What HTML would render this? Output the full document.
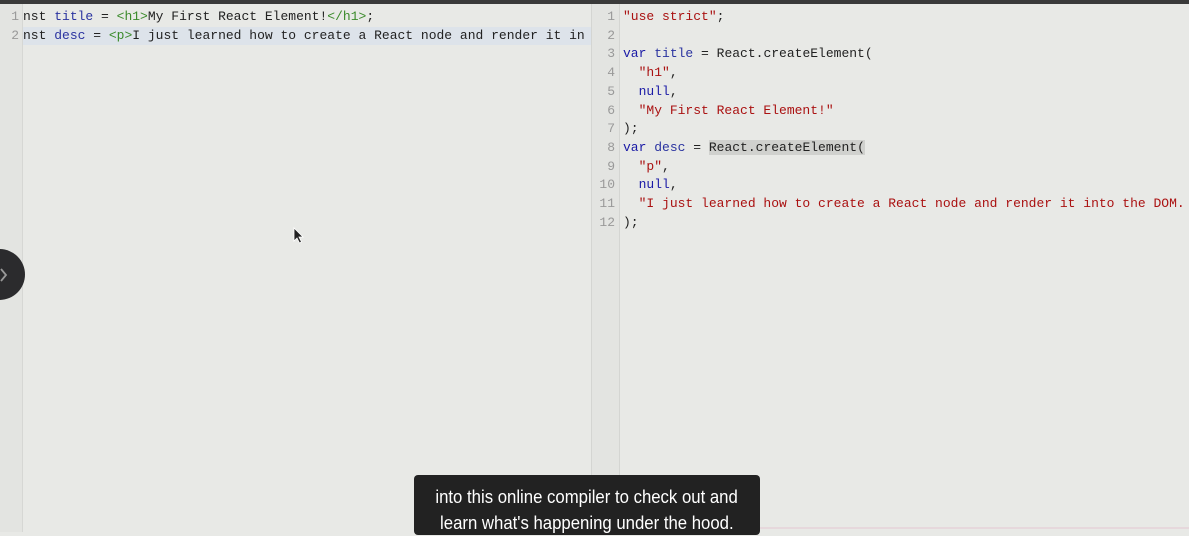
<!DOCTYPE html>
<html><head><style>
body{margin:0;width:1189px;height:532px;overflow:hidden;background:#e8e9e6;position:relative;font-family:"Liberation Mono",monospace;font-size:13px}
.top{position:absolute;left:0;top:0;width:1189px;height:4px;background:#3a3a3a}
.lg{position:absolute;left:0;top:4px;width:22px;height:528px;background:#e3e4e1;border-right:1px solid #d6d7d4}
.mid{position:absolute;left:591px;top:4px;width:27px;height:528px;background:#e3e4e1;border-left:1px solid #d4d5d2;border-right:1px solid #d4d5d2}
.ln{position:absolute;white-space:pre;line-height:18.7px;height:18.7px}
.num{color:#999;text-align:right}
.k{color:#1a1aa6}.v{color:#2a33a0}.s{color:#a11}.t{color:#3a8a2a}.d{color:#222}
.hl{position:absolute;left:23px;top:27px;width:568px;height:18px;background:#dde3ea}
.sel{background:#d0d1ce}
.sub{position:absolute;left:414px;top:475px;width:346px;height:60px;background:#222;border-radius:4px;color:#fff;font-family:"Liberation Sans",sans-serif;font-size:18px;text-align:center;line-height:26px;padding-top:9px;box-sizing:border-box;white-space:nowrap}
.sub span{display:inline-block;transform:scaleX(0.93)}
.circ{position:absolute;left:-26px;top:249px;width:51px;height:51px;border-radius:50%;background:#2b2b2d}
.pink{position:absolute;left:760px;top:527px;width:429px;height:2px;background:#e6d8dc}
</style></head><body>
<div class="top"></div>
<div class="lg"></div>
<div class="hl"></div>
<div class="mid"></div>
<div class="ln num" style="left:0;width:19px;top:8px">1</div>
<div class="ln num" style="left:0;width:19px;top:27px">2</div>
<div class="ln d" style="left:23px;top:8px">nst <span class="v">title</span> = <span class="t">&lt;h1&gt;</span>My First React Element!<span class="t">&lt;/h1&gt;</span>;</div>
<div class="ln d" style="left:23px;top:27px">nst <span class="v">desc</span> = <span class="t">&lt;p&gt;</span>I just learned how to create a React node and render it in</div>
<div style="position:absolute;left:592px;top:8px;width:23px">
<div class="num" style="line-height:18.7px">1<br>2<br>3<br>4<br>5<br>6<br>7<br>8<br>9<br>10<br>11<br>12</div></div>
<div class="ln d" style="left:623px;top:8px;height:auto"><span class="s">"use strict"</span>;

<span class="k">var</span> <span class="v">title</span> = React.createElement(
  <span class="s">"h1"</span>,
  <span class="k">null</span>,
  <span class="s">"My First React Element!"</span>
);
<span class="k">var</span> <span class="v">desc</span> = <span class="sel">React.createElement(</span>
  <span class="s">"p"</span>,
  <span class="k">null</span>,
  <span class="s">"I just learned how to create a React node and render it into the DOM.</span>
);</div>
<svg style="position:absolute;left:293px;top:227px" width="12" height="18" viewBox="0 0 12 18"><path d="M1 1 L1 14 L4 11 L6.5 16 L8.5 15 L6 10 L10 10 Z" fill="#222" stroke="#fff" stroke-width="0.8"/></svg>
<div class="circ"></div>
<svg style="position:absolute;left:0;top:268px" width="8" height="14"><path d="M1 1 L6 7 L1 13" stroke="#999" stroke-width="1.8" fill="none"/></svg>
<div class="pink"></div>
<div class="sub"><span>into this online compiler to check out and</span><br><span>learn what's happening under the hood.</span></div>
</body></html>
